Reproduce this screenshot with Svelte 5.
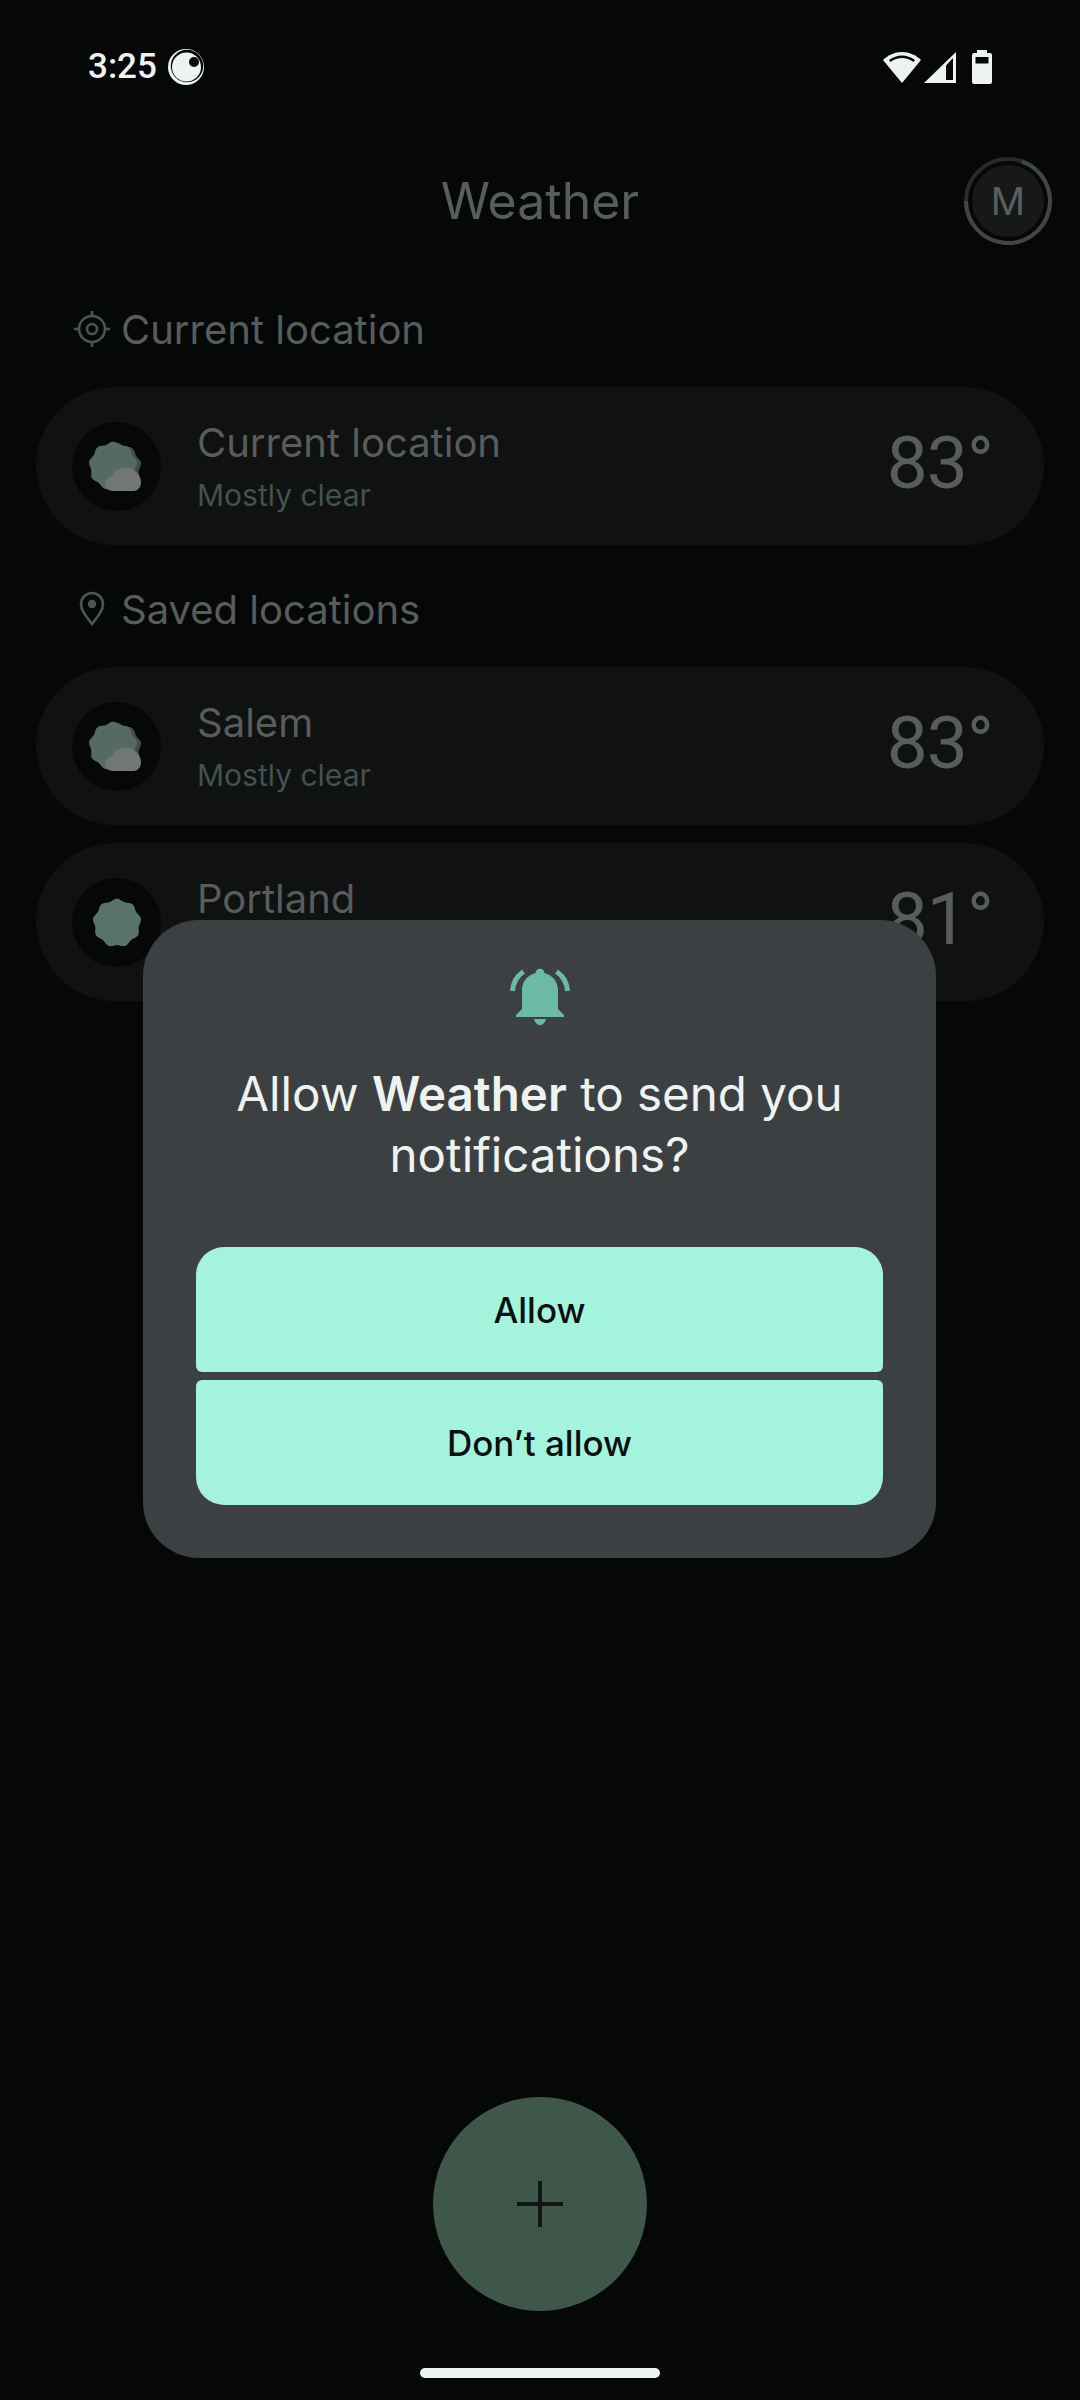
<script lang="ts">
	const locations = {
		current: [{ name: 'Current location', sub: 'Mostly clear', temp: '83°', cloud: true }],
		saved: [
			{ name: 'Salem', sub: 'Mostly clear', temp: '83°', cloud: true },
			{ name: 'Portland', sub: 'Clear', temp: '81°', cloud: false }
		]
	};

	// scalloped sun shape used by the weather icon
	function blob(cx, cy, r, lobes, depth) {
		let d = '';
		for (let i = 0; i < 120; i++) {
			const t = (i / 120) * Math.PI * 2;
			const rr = r + depth * Math.cos(lobes * t);
			const x = cx + rr * Math.sin(t);
			const y = cy - rr * Math.cos(t);
			d += (i ? 'L' : 'M') + x.toFixed(2) + ' ' + y.toFixed(2);
		}
		return d + 'Z';
	}
	const sun = blob(45, 45, 23.200, 9, 1.100);
</script>

{#snippet row(item)}
	<div class="card">
		<div class="thumb">
			<svg viewBox="0 0 89 89" width="89" height="89">
				{#if item.cloud}
					<path d={sun} fill="#474b4b" />
					<path d={sun} fill="#556a62" transform="translate(-4 -1)" />
					<path d="M41 69c-4.500 0-8-3-8-7 0-4 3-7 7-7.500 2.500-5 7-8.500 13-8.500 9 0 16 6 16 14 0 5-2.500 8-6.500 9z" fill="#727674" />
				{:else}
					<path d={sun} fill="#5a736a" />
				{/if}
			</svg>
		</div>
		<div class="text">
			<div class="name">{item.name}</div>
			<div class="sub">{item.sub}</div>
		</div>
		<div class="temp">{item.temp}</div>
	</div>
{/snippet}

<div class="screen">
	<div class="status">
		<div class="status-left">
			<span class="time">3:25</span>
			<svg viewBox="0 0 36 36" width="36" height="36">
				<circle cx="18" cy="18" r="18" fill="#eef3f0" />
				<circle cx="19" cy="17" r="16.200" fill="#050807" />
				<circle cx="18.500" cy="18" r="14.500" fill="#eef3f0" />
				<circle cx="26" cy="13" r="5" fill="#050807" />
			</svg>
		</div>
		<div class="status-right">
			<svg viewBox="0 0 38 31" width="38" height="31">
				<path d="M19 31 0 8C5 3 12 0 19 0s14 3 19 8z" fill="#eef3f0" />
				<path d="M6 8c4-3 8.500-4.500 13-4.500S28 5 32 8l-1.500 2C27 7.500 23 6 19 6S11 7.500 7.500 10z" fill="#050807" />
			</svg>
			<svg viewBox="0 0 32 31" width="32" height="31">
				<path d="M32 0v31H0z" fill="#eef3f0" />
				<path d="M22 28V13.500L29 6v22z" fill="#050807" />
			</svg>
			<svg viewBox="0 0 20 34" width="20" height="34">
				<path d="M5 0h10v3h3a2 2 0 0 1 2 2v27a2 2 0 0 1-2 2H2a2 2 0 0 1-2-2V5a2 2 0 0 1 2-2h3z" fill="#eef3f0" />
				<rect x="3.500" y="7" width="13" height="6.500" fill="#050807" />
			</svg>
		</div>
	</div>

	<div class="appbar">
		<span></span>
		<h1>Weather</h1>
		<div class="avatar">
			<svg viewBox="0 0 88 88" width="88" height="88">
				<circle cx="44" cy="44" r="42" fill="none" stroke="#282a2a" stroke-width="4" />
				<path d="M58 4.500A42 42 0 1 1 2 44" fill="none" stroke="#424545" stroke-width="4" />
				<circle cx="44" cy="44" r="36" fill="#171919" />
			</svg>
			<span>M</span>
		</div>
	</div>

	<div class="section-head">
		<svg viewBox="0 0 36 36" width="36" height="36" fill="none" stroke="#47594f" stroke-width="2.600">
			<circle cx="18" cy="18" r="13" />
			<circle cx="18" cy="18" r="5" />
			<path d="M18 0v5M18 31v5M0 18h5M31 18h5" />
		</svg>
		<span>Current location</span>
	</div>
	<div class="list">
		{#each locations.current as item}
			{@render row(item)}
		{/each}
	</div>

	<div class="section-head">
		<svg viewBox="0 0 36 36" width="36" height="36" fill="none" stroke="#47594f" stroke-width="2.600">
			<path d="M18 33C11 24 7 19 7 13a11 11 0 0 1 22 0c0 6-4 11-11 20z" />
			<circle cx="18" cy="13" r="4.200" fill="#47594f" stroke="none" />
		</svg>
		<span>Saved locations</span>
	</div>
	<div class="list">
		{#each locations.saved as item}
			{@render row(item)}
		{/each}
	</div>

	<div class="dialog" role="dialog" aria-modal="true">
		<svg class="bell" viewBox="0 0 60 60" width="60" height="60" fill="#6bbaa6">
			<path d="M6 50v-2l6-6V23c0-9 6-15 13.500-16.800a4.500 4.500 0 1 1 9 0C42 8 48 14 48 23v19l6 6v2z" />
			<path d="M24 52h12c-1 3.500-3 6-6 6s-5-2.500-6-6z" />
			<path d="M2.500 24C3 16 7 9 13.500 4.500M57.500 24C57 16 53 9 46.500 4.500" fill="none" stroke="#6bbaa6" stroke-width="5" />
		</svg>
		<h2>Allow <b>Weather</b> to send you notifications?</h2>
		<div class="actions">
			<button class="first">Allow</button>
			<button class="last">Don’t allow</button>
		</div>
	</div>

	<button class="fab" aria-label="Add location">
		<svg viewBox="0 0 46 46" width="46" height="46">
			<path d="M23 0v46M0 23h46" stroke="#111514" stroke-width="4" fill="none" />
		</svg>
	</button>
	<div class="home-bar"></div>
</div>

<style>
	:global(body) {
		background: #050807;
	}

	.screen {
		position: relative;
		width: 1080px;
		height: 2400px;
		overflow: hidden;
		background: #050807;
		font-family: Inter, "Noto Sans", sans-serif;
	}

	.status {
		height: 135px;
		box-sizing: border-box;
		padding: 49px 88px 0;
		display: flex;
		justify-content: space-between;
		align-items: flex-start;
	}

	.status-left {
		display: flex;
		align-items: center;
		gap: 11px;
	}

	.time {
		font-family: Roboto, sans-serif;
		font-size: 35px;
		line-height: 36px;
		font-weight: 500;
		color: #eef3f0;
	}

	.status-right {
		display: flex;
		align-items: center;
		gap: 3px;
		margin-top: 1px;
	}

	.status-right svg:last-child {
		margin-left: 13px;
	}

	.appbar {
		height: 130px;
		padding: 2px 28px 0;
		box-sizing: border-box;
		display: grid;
		grid-template-columns: 1fr auto 1fr;
		align-items: center;
	}

	h1 {
		margin: 0;
		font-size: 50px;
		font-weight: 400;
		color: #585c5c;
	}

	.avatar {
		position: relative;
		justify-self: end;
		width: 88px;
		height: 88px;
		display: flex;
		align-items: center;
		justify-content: center;
		font-size: 38px;
		color: #5a5e5e;
	}

	.avatar svg {
		position: absolute;
		inset: 0;
	}

	.avatar span {
		position: relative;
	}

	.section-head {
		height: 40px;
		padding: 44px 0 38px 74px;
		display: flex;
		align-items: center;
		gap: 11px;
		font-size: 40px;
		color: #585c5b;
	}

	.list {
		display: flex;
		flex-direction: column;
		gap: 18px;
		padding: 0 36px;
	}

	.card {
		height: 158px;
		box-sizing: border-box;
		padding: 0 51px 0 36px;
		border-radius: 79px;
		background: #101111;
		display: flex;
		align-items: center;
		gap: 36px;
	}

	.thumb {
		width: 89px;
		height: 89px;
		border-radius: 50%;
		background: #050807;
		flex-shrink: 0;
	}

	.text {
		flex: 1;
		min-width: 0;
	}

	.name {
		font-size: 40px;
		line-height: 50px;
		color: #585c5b;
	}

	.sub {
		margin-top: 8px;
		font-size: 30px;
		line-height: 38px;
		color: #41534c;
	}

	.temp {
		margin-top: -6px;
		font-family: Roboto, sans-serif;
		font-size: 73px;
		letter-spacing: -1px;
		color: #585c5b;
	}

	.dialog {
		position: absolute;
		left: 143px;
		top: 920px;
		width: 793px;
		height: 638px;
		box-sizing: border-box;
		padding: 47px 53px 53px;
		border-radius: 56px;
		background: #3d4043;
		display: flex;
		flex-direction: column;
		align-items: center;
	}

	h2 {
		margin: 36px 0 0;
		font-size: 47.500px;
		line-height: 61px;
		font-weight: 400;
		text-align: center;
		color: #eef3f0;
	}

	h2 b {
		font-weight: 600;
	}

	.actions {
		margin-top: auto;
		width: 100%;
		display: flex;
		flex-direction: column;
		gap: 8px;
	}

	.actions button {
		height: 125px;
		border: none;
		background: #a3f3dd;
		font-family: inherit;
		font-size: 35px;
		font-weight: 450;
		color: #0c0f0e;
	}

	.first {
		border-radius: 28px 28px 6px 6px;
	}

	.last {
		border-radius: 6px 6px 28px 28px;
	}

	.fab {
		position: absolute;
		left: 433px;
		top: 2097px;
		width: 214px;
		height: 214px;
		padding: 0;
		border: none;
		border-radius: 50%;
		background: #3e574a;
		display: flex;
		align-items: center;
		justify-content: center;
	}

	.home-bar {
		position: absolute;
		left: 420px;
		top: 2368px;
		width: 240px;
		height: 10px;
		border-radius: 5px;
		background: #eef3f0;
	}
</style>
